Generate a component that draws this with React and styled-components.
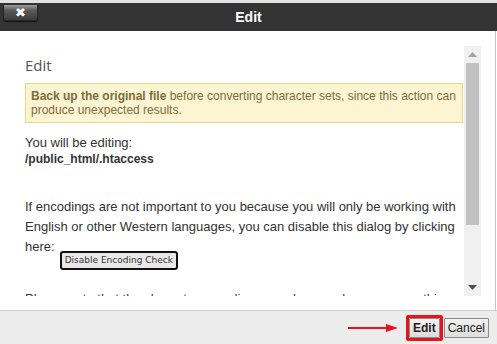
import React from 'react'
import styled, { createGlobalStyle } from 'styled-components'

const GlobalStyle = createGlobalStyle`
  html, body {
    margin: 0;
    padding: 0;
    background: #fff;
  }
  body {
    font-family: "Liberation Sans", Arial, sans-serif;
    overflow: hidden;
  }
`

const Dialog = styled.div`
  width: 497px;
  height: 344px;
  display: flex;
  flex-direction: column;
  background: #fff;
  border-top: 3px solid #e2e2e2;
  box-sizing: border-box;
`

const TitleBar = styled.div`
  height: 28px;
  flex: none;
  background: #333;
  display: grid;
  grid-template-columns: 1fr auto 1fr;
  align-items: start;
`

const CloseButton = styled.button`
  margin: 2px 0 0 3px;
  width: 35px;
  height: 16px;
  padding: 0;
  border: 1px solid #262626;
  border-top: none;
  border-radius: 0 0 3px 3px;
  background: linear-gradient(180deg, #9c9c9c 0%, #5a5a5a 35%, #3c3c3c 100%);
  box-shadow: 0 1px 1px rgba(0, 0, 0, 0.6);
  color: #fff;
  font: bold 13px/14px "DejaVu Sans", sans-serif;
  display: flex;
  align-items: center;
  justify-content: center;
`

const Title = styled.h1`
  margin: 0;
  grid-column: 2;
  color: #fff;
  font: bold 14px/28px "Liberation Sans", Arial, sans-serif;
`

const Body = styled.div`
  flex: 1;
  min-height: 0;
  display: flex;
  border-right: 1px solid #c8c8c8;
  margin-right: 1px;
`

const Scroller = styled.div`
  flex: 1;
  min-width: 0;
  margin: 15px 0 14px 0;
  padding: 0 0 0 25px;
  overflow: hidden;
  color: #333;
  font-size: 13px;
`

const Heading = styled.h2`
  margin: 10px 0 9px;
  font: 15px/18px "Open Sans", sans-serif;
  color: #555;
`

const Warning = styled.div`
  margin: 0 1px 0 0;
  padding: 5px;
  height: 40px;
  box-sizing: border-box;
  background: #fdf5d2;
  border: 1px solid #e5d98f;
  color: #7c6c3e;
  font-size: 12px;
  line-height: 14px;
`

const Editing = styled.p`
  margin: 12px 0 0;
  line-height: 16px;

  b {
    display: block;
    font-size: 12px;
  }
`

const Notice = styled.p`
  margin: ${p => p.$top}px 6px 0 0;
  line-height: 20px;
`

const SmallButton = styled.button`
  margin-left: 5px;
  vertical-align: -12px;
  padding: 0 3px;
  height: 19px;
  border: 2px solid #111;
  border-radius: 3px;
  background: #e9e9e9;
  color: #333;
  font: 9px/13px "DejaVu Sans", sans-serif;
`

const Scrollbar = styled.div`
  flex: none;
  width: 17px;
  margin: 15px 14px 14px 0;
  background: #f0f0f0;
  display: flex;
  flex-direction: column;
  align-items: center;
`

const Arrow = styled.div`
  height: 17px;
  flex: none;
  display: flex;
  align-items: center;
  justify-content: center;
  width: 100%;
`

const Thumb = styled.div`
  width: 13px;
  height: 162px;
  background: #c1c1c1;
  flex: none;
`

const Spacer = styled.div`
  flex: 1;
`

const Footer = styled.div`
  height: 33px;
  flex: none;
  background: #ececec;
  border-top: 1px solid #cfcfcf;
  display: flex;
  align-items: center;
  justify-content: flex-end;
  padding: 0 8px 0 0;
  gap: 1px;
`

const Pointer = styled.svg`
  margin-right: 7px;
  flex: none;
`

const Highlight = styled.div`
  border: 3px solid #e8131b;
  border-radius: 2px;
  padding: 0;
  display: flex;
`

const ActionButton = styled.button`
  height: 20px;
  padding: 0 3px;
  border: 1px solid #8a8a8a;
  border-radius: 1px;
  background: linear-gradient(180deg, #f2f2f2 0%, #dcdcdc 100%);
  color: #222;
  font: ${p => (p.$primary ? 'bold' : 'normal')} 12px/18px "Liberation Sans", Arial, sans-serif;
`

function Triangle({ up, color }) {
  return (
    <svg width="9" height="5" viewBox="0 0 9 5">
      <path d={up ? 'M0 5 L4.5 0 L9 5 Z' : 'M0 0 L9 0 L4.5 5 Z'} fill={color} />
    </svg>
  )
}

export default function App() {
  return (
    <>
      <GlobalStyle />
      <Dialog>
        <TitleBar>
          <CloseButton aria-label="Close">✖</CloseButton>
          <Title>Edit</Title>
        </TitleBar>

        <Body>
          <Scroller>
            <Heading>Edit</Heading>
            <Warning>
              <b>Back up the original file</b> before converting character sets, since this action can produce unexpected results.
            </Warning>
            <Editing>
              You will be editing:
              <b>/public_html/.htaccess</b>
            </Editing>
            <Notice $top={30}>
              If encodings are not important to you because you will only be working with English or other Western languages, you can disable this dialog by clicking here:
              <SmallButton>Disable Encoding Check</SmallButton>
            </Notice>
            <Notice $top={19}>
              Please note that the character encoding may change when you save this file.
            </Notice>
          </Scroller>
          <Scrollbar>
            <Arrow><Triangle up color="#a3a3a3" /></Arrow>
            <Thumb />
            <Spacer />
            <Arrow><Triangle color="#505050" /></Arrow>
          </Scrollbar>
        </Body>

        <Footer>
          <Pointer width="50" height="10" viewBox="0 0 50 10">
            <path d="M0 5 H40" stroke="#e8131b" strokeWidth="2" />
            <path d="M38 1 L50 5 L38 9 Z" fill="#e8131b" />
          </Pointer>
          <Highlight>
            <ActionButton $primary>Edit</ActionButton>
          </Highlight>
          <ActionButton>Cancel</ActionButton>
        </Footer>
      </Dialog>
    </>
  )
}
